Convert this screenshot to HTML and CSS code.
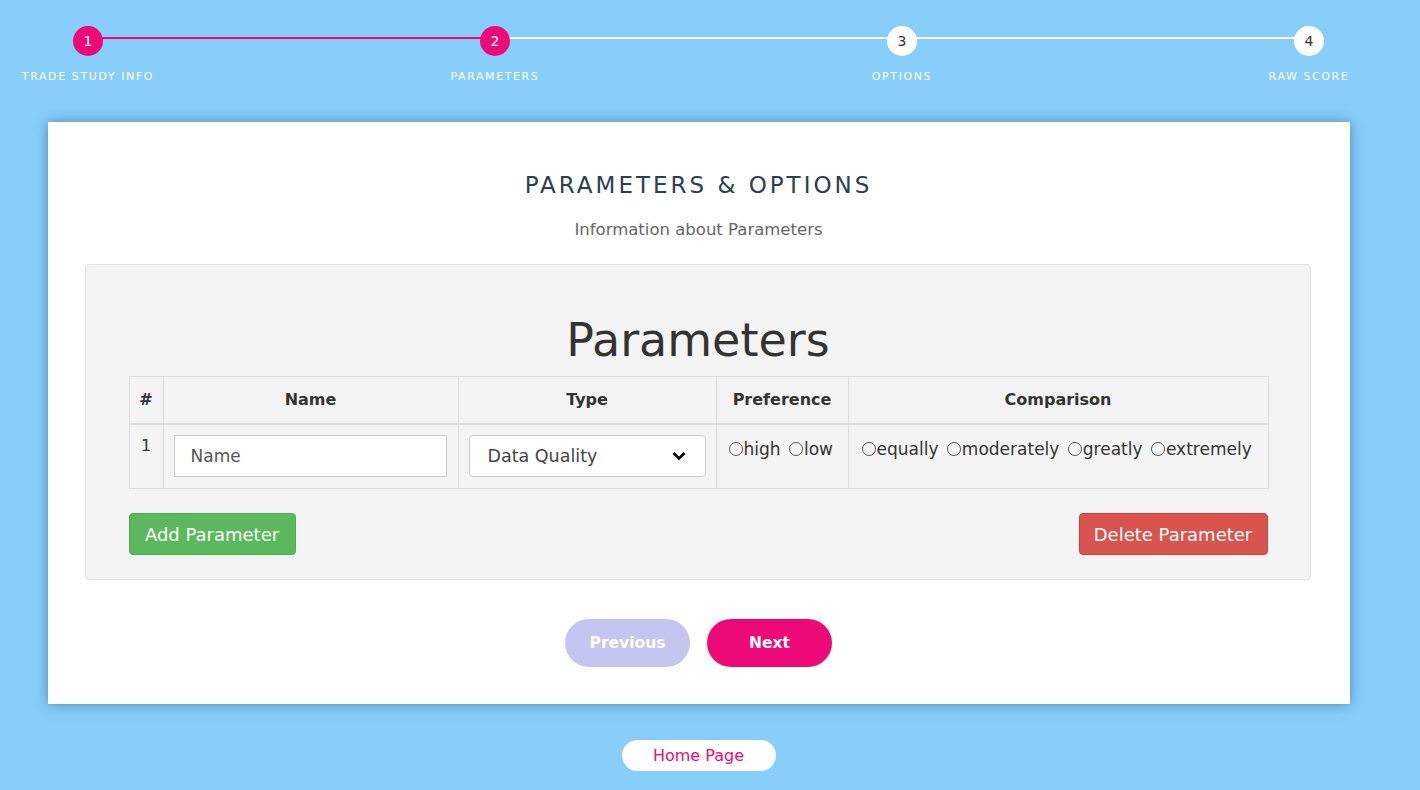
FILE: index.html
```html
<!DOCTYPE html>
<html lang="en">
<head>
<meta charset="utf-8">
<title>Parameters &amp; Options</title>
<link rel="stylesheet" href="styles.css">
</head>
<body>
<div class="page">
  <ol class="stepper">
    <li class="step done"><span class="dot">1</span><span class="label">Trade Study Info</span></li>
    <li class="step done"><span class="dot">2</span><span class="label">Parameters</span></li>
    <li class="step"><span class="dot">3</span><span class="label">Options</span></li>
    <li class="step"><span class="dot">4</span><span class="label">Raw Score</span></li>
  </ol>

  <section class="card">
    <h2 class="card-title">PARAMETERS &amp; OPTIONS</h2>
    <p class="card-sub">Information about Parameters</p>

    <div class="well">
      <h1 class="well-title">Parameters</h1>
      <table class="ptable">
        <colgroup>
          <col class="c-num"><col class="c-name"><col class="c-type"><col class="c-pref"><col class="c-comp">
        </colgroup>
        <thead>
          <tr><th>#</th><th>Name</th><th>Type</th><th>Preference</th><th>Comparison</th></tr>
        </thead>
        <tbody>
          <tr>
            <td class="num">1</td>
            <td><input class="text-input" type="text" placeholder="Name"></td>
            <td>
              <div class="select">
                <span>Data Quality</span>
                <svg width="14" height="10" viewBox="0 0 14 10"><path d="M1.5 2 L7 7.5 L12.5 2" fill="none" stroke="#000" stroke-width="2.6"/></svg>
              </div>
            </td>
            <td class="radios">
              <label><input type="radio" name="pref">high</label>
              <label><input type="radio" name="pref">low</label>
            </td>
            <td class="radios">
              <label><input type="radio" name="cmp">equally</label>
              <label><input type="radio" name="cmp">moderately</label>
              <label><input type="radio" name="cmp">greatly</label>
              <label><input type="radio" name="cmp">extremely</label>
            </td>
          </tr>
        </tbody>
      </table>
      <div class="well-actions">
        <button class="btn btn-add">Add Parameter</button>
        <button class="btn btn-del">Delete Parameter</button>
      </div>
    </div>

    <div class="nav">
      <button class="pill pill-prev">Previous</button>
      <button class="pill pill-next">Next</button>
    </div>
  </section>

  <div class="home">
    <button class="home-btn">Home Page</button>
  </div>
</div>
</body>
</html>
```

FILE: styles.css
```css
* { box-sizing: border-box; }

body {
  margin: 0;
  background: #87cefa;
  font-family: "DejaVu Sans", "Liberation Sans", sans-serif;
  color: #333;
}

.page {
  width: 1397px;
}

/* stepper */
.stepper {
  list-style: none;
  margin: 0;
  padding: 26px 0 0;
  display: flex;
  justify-content: space-between;
}

.step {
  width: 176px;
  display: flex;
  flex-direction: column;
  align-items: center;
  position: relative;
}

.step + .step::before {
  content: "";
  position: absolute;
  top: 11px;
  left: -319px;
  width: 407px;
  height: 2px;
  background: #fff;
}

.step.done + .step.done::before {
  background: #ee0979;
}

.dot {
  position: relative;
  z-index: 1;
  width: 30px;
  height: 30px;
  border-radius: 50%;
  background: #fff;
  color: #333;
  font-size: 14px;
  line-height: 30px;
  text-align: center;
}

.step.done .dot {
  background: #ee0979;
  color: #fff;
}

.label {
  margin-top: 14px;
  font-size: 11px;
  line-height: 13px;
  letter-spacing: 1.6px;
  text-transform: uppercase;
  color: #fff;
  white-space: nowrap;
}

/* card */
.card {
  width: 1302px;
  margin: 39px auto 0;
  background: #fff;
  padding: 51px 0 37px;
  box-shadow: 0 0 12px rgba(40, 90, 130, 0.6);
}

.card-title {
  margin: 0;
  text-align: center;
  font-size: 23px;
  line-height: 24px;
  font-weight: normal;
  letter-spacing: 3px;
  color: #2c3e50;
}

.card-sub {
  margin: 22px 0 0;
  text-align: center;
  font-size: 16.5px;
  line-height: 22px;
  color: #666;
}

.well {
  width: 1226px;
  margin: 23px 0 0 37px;
  background: #f4f4f4;
  border: 1px solid #e3e3e3;
  border-radius: 4px;
  padding: 51px 42px 24px 43px;
}

.well-title {
  margin: 0 0 12px;
  text-align: center;
  font-size: 46px;
  line-height: 48px;
  font-weight: normal;
  color: #333;
}

.ptable {
  width: 1139px;
  border-collapse: collapse;
  table-layout: fixed;
}

.c-num { width: 34px; }
.c-name { width: 295px; }
.c-type { width: 258px; }
.c-pref { width: 132px; }
.c-comp { width: 420px; }

.ptable th {
  border: 1px solid #ddd;
  border-bottom-width: 2px;
  padding: 12px 4px;
  line-height: 22px;
  font-size: 16px;
  font-weight: bold;
  color: #333;
  text-align: center;
}

.ptable td {
  border: 1px solid #ddd;
  padding: 10px 10px 11px;
  vertical-align: top;
  font-size: 16px;
  line-height: 22px;
  color: #333;
}

.ptable td.num {
  padding: 10px 0 0;
  text-align: center;
}

.text-input {
  display: block;
  width: 273px;
  height: 42px;
  border: 1px solid #ccc;
  background: #fff;
  padding: 0 16px;
  font-family: inherit;
  font-size: 17px;
  color: #555;
  outline: none;
}

.text-input::placeholder { color: #555; }

.select {
  width: 237px;
  height: 42px;
  border: 1px solid #ccc;
  border-radius: 4px;
  background: #fff;
  display: flex;
  align-items: center;
  justify-content: space-between;
  padding: 0 19px 0 18px;
  font-size: 17.5px;
  color: #444;
}

.radios {
  white-space: nowrap;
}

.ptable td.radios {
  padding: 13px 0 0 12px;
  font-size: 17px;
  letter-spacing: 0;
}

.ptable td.radios + td.radios { padding-left: 13px; }

.radios label {
  margin-right: 3px;
}

.radios input {
  appearance: none;
  -webkit-appearance: none;
  width: 14px;
  height: 14px;
  margin: 0 1px 0 0;
  border: 1px solid #555;
  border-radius: 50%;
  background: transparent;
  vertical-align: -1px;
}

.well-actions {
  margin-top: 24px;
  display: flex;
  justify-content: space-between;
}

.btn {
  height: 42px;
  border: 1px solid transparent;
  border-radius: 4px;
  padding: 0;
  font-family: inherit;
  font-size: 18px;
  color: #fff;
}

.btn-add {
  width: 167px;
  background: #5cb85c;
  border-color: #4cae4c;
}

.btn-del {
  width: 189px;
  background: #d9534f;
  border-color: #d43f3a;
}

.nav {
  margin-top: 39px;
  display: flex;
  justify-content: center;
  gap: 17px;
}

.pill {
  width: 125px;
  height: 48px;
  border: none;
  border-radius: 24px;
  font-family: inherit;
  font-size: 15.5px;
  font-weight: bold;
  color: #fff;
}

.pill-prev { background: #c5c5f1; }
.pill-next { background: #ee0979; }

.home {
  margin-top: 36px;
  display: flex;
  justify-content: center;
}

.home-btn {
  width: 154px;
  height: 31px;
  border: none;
  border-radius: 16px;
  background: #fff;
  font-family: inherit;
  font-size: 16px;
  color: #ee0979;
}
```
